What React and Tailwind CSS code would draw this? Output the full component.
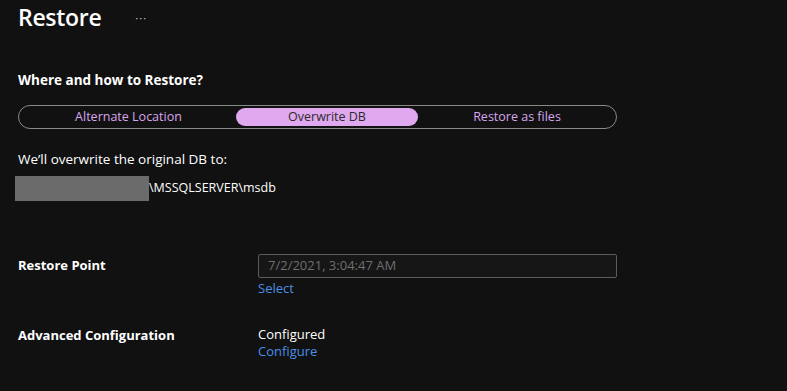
export default function App() {
  const font = { fontFamily: '"Segoe UI", "Open Sans", "Noto Sans", sans-serif' };
  return (
    <div className="w-[787px] h-[391px] bg-[#111111] text-white overflow-hidden" style={font}>
      <div className="pl-[18px] pr-[170px]">
        <div className="flex items-center h-[34px]">
          <h1 className="text-[23px] font-semibold leading-none tracking-[-0.3px]">Restore</h1>
          <span className="ml-[34px] text-[11px] text-[#cfcfcf] tracking-[1px] leading-none">···</span>
        </div>

        <h2 className="mt-[38px] text-[13.5px] font-bold leading-[16px]">Where and how to Restore?</h2>

        <div className="mt-[17px] h-[24px] border border-[#8a8a8a] rounded-full flex items-center pl-[2px] text-[12.5px]">
          <button className="w-[215px] text-center text-[#d7a6ee] leading-[18px]">Alternate Location</button>
          <button className="w-[182px] h-[18px] rounded-full bg-[#e0a8ee] text-[#2b2b2b] leading-[18px]">Overwrite DB</button>
          <button className="w-[198px] text-center text-[#d7a6ee] leading-[18px]">Restore as files</button>
        </div>

        <p className="mt-[21px] text-[13.5px] leading-[18px]">We’ll overwrite the original DB to:</p>
        <div className="mt-[8px] -ml-[3px] flex items-center">
          <div className="w-[134px] h-[25px] bg-[#6b6b6b]" />
          <span className="text-[12.5px] leading-none">\MSSQLSERVER\msdb</span>
        </div>

        <div className="mt-[53px] grid grid-cols-[240px_1fr] text-[13px]">
          <div className="font-bold pt-[2px]">Restore Point</div>
          <div>
            <div className="h-[24px] border border-[#5c5c5c] bg-[#161616] rounded-[2px] flex items-center px-[9px] text-[#6e6e6e]">
              7/2/2021, 3:04:47 AM
            </div>
            <a className="block text-[#4a8fe7] leading-[18px] mt-[1px]">Select</a>
          </div>

          <div className="font-bold mt-[29px] leading-[18px]">Advanced Configuration</div>
          <div className="mt-[29px] leading-[17px]">
            <div>Configured</div>
            <a className="block text-[#4a8fe7]">Configure</a>
          </div>
        </div>
      </div>
    </div>
  );
}
